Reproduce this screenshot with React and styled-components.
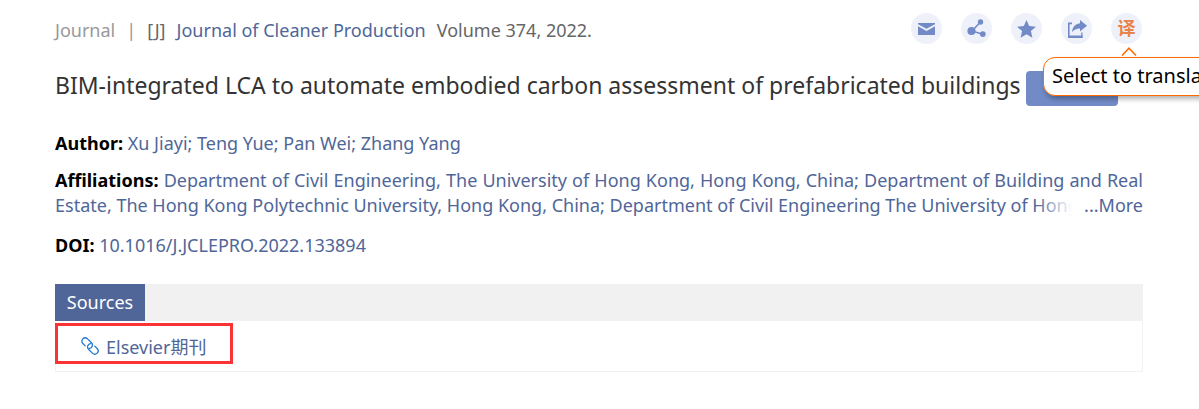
import styled, { createGlobalStyle } from "styled-components";

const color = {
  link: "#506698",
  icon: "#728bc7",
  iconBg: "#eef1f9",
  orange: "#ff6a00",
  red: "#fa3434",
};

const GlobalStyle = createGlobalStyle`
  * {
    box-sizing: border-box;
  }
  body {
    margin: 0;
    background: #fff;
    overflow-x: hidden;
    font-family: "Noto Sans", "Noto Sans CJK SC", sans-serif;
    font-size: 18px;
    line-height: 25px;
    color: #333;
  }
  a {
    color: ${color.link};
    text-decoration: none;
  }
  button {
    border: 0;
    padding: 0;
    font: inherit;
    cursor: pointer;
  }
`;

const Container = styled.main`
  padding: 13px 56px 0 55px;
  overflow: hidden;
`;

const TopBar = styled.header`
  display: flex;
  justify-content: space-between;
  align-items: center;
  height: 34px;
`;

const Source = styled.div`
  display: flex;
  gap: 11px;
  color: #666;
  white-space: nowrap;
`;

const Kind = styled.span`
  color: #999;
`;

const Tools = styled.div`
  display: flex;
  gap: 19px;
  padding: 0 1px 3px 0;
`;

const ToolButton = styled.button`
  position: relative;
  display: flex;
  justify-content: center;
  align-items: center;
  width: 31px;
  height: 31px;
  border-radius: 50%;
  background: ${color.iconBg};
  color: ${(props) => (props.$active ? "#e8834a" : color.icon)};
  font-size: 18px;
  font-weight: ${(props) => (props.$active ? 700 : 400)};
`;

const Caret = styled.svg`
  position: absolute;
  top: 34px;
  left: 10px;
`;

const Tooltip = styled.span`
  position: absolute;
  z-index: 1;
  top: 44px;
  left: -68px;
  width: 240px;
  height: 39px;
  padding: 0 8px;
  border: 1px solid ${color.orange};
  border-radius: 12px;
  background: #fff;
  box-shadow: 2px 3px 5px rgba(0, 0, 0, 0.3);
  color: #000;
  font-size: 20px;
  font-weight: 400;
  line-height: 36px;
  text-align: left;
  white-space: nowrap;
`;

const TitleRow = styled.div`
  display: flex;
  align-items: center;
  gap: 5px;
  margin: 23px 0 25px;
`;

const Title = styled.h1`
  margin: 0;
  font-size: 23px;
  font-weight: 400;
  line-height: 30px;
  padding-bottom: 6px;
  white-space: nowrap;
`;

const ExportButton = styled.button`
  flex: none;
  width: 92px;
  height: 35px;
  border-radius: 4px;
  background: ${color.icon};
`;

const Field = styled.div`
  position: relative;
  max-height: 50px;
  margin-bottom: ${(props) => props.$gap || 12}px;
  overflow: hidden;
  text-align: justify;
`;

const Label = styled.strong`
  color: #000;
  font-weight: 700;
`;

const More = styled.a`
  position: absolute;
  right: 0;
  bottom: 0;
  padding-left: 48px;
  background: linear-gradient(to right, transparent, #fff 36px);
`;

const TabBar = styled.div`
  display: flex;
  margin-top: 26px;
  background: #f1f1f1;
`;

const Tab = styled.button`
  width: 90px;
  height: 37px;
  background: ${color.link};
  color: #fff;
`;

const Panel = styled.div`
  padding: 2px 0 7px;
  border: 1px solid #f1f1f1;
  border-top: 0;
  margin-bottom: 20px;
`;

const SourceLink = styled.a`
  display: flex;
  align-items: center;
  gap: 7px;
  width: 178px;
  height: 41px;
  margin-left: -1px;
  padding: 7px 0 0 23px;
  border: 3px solid ${color.red};

  svg {
    margin-bottom: 3px;
  }
`;

const MailIcon = () => (
  <svg width="17" height="12" viewBox="0 0 17 12" fill="currentColor">
    <path d="M0 0h17v1.2L8.5 5.8 0 1.2zM0 3.2l8.5 4.7L17 3.2V12H0z" />
  </svg>
);

const ShareIcon = () => (
  <svg width="19" height="19" viewBox="0 0 19 19" fill="currentColor">
    <path
      d="M13.5 3 5 12l10 3"
      fill="none"
      stroke="currentColor"
      strokeWidth="1.5"
    />
    <circle cx="13.5" cy="3" r="2.7" />
    <circle cx="4.5" cy="12" r="4.1" />
    <circle cx="15.8" cy="15.1" r="2.9" />
  </svg>
);

const StarIcon = () => (
  <svg width="19" height="18" viewBox="0 0 19 18" fill="currentColor">
    <path d="m9.5 0 2.7 6 6.8.7-5.1 4.4 1.5 6.6-5.9-3.5-5.9 3.5 1.5-6.6L0 6.7 6.8 6z" />
  </svg>
);

const ExportIcon = () => (
  <svg width="20" height="18" viewBox="0 0 20 18" fill="currentColor">
    <path d="M5 2.5v1.7H2.6v11.2H15.5V18H1V2.5z" />
    <path d="M14.2 12.5h1.3V18h-1.3z" />
    <path d="M13 0l7 5.8-7 5.8V8.4C9.7 8.3 7.3 9.5 5 12c.5-4.8 3-8.1 8-8.8z" />
  </svg>
);

const LinkIcon = () => (
  <svg
    width="18"
    height="18"
    viewBox="0 0 18 18"
    fill="none"
    stroke="#1f78d1"
    strokeWidth="1.3"
    strokeLinecap="round"
  >
    <g transform="rotate(45 9 9)">
      <path d="M5.5 12.3H2.2a3.3 3.3 0 0 1 0-6.6h5.6a3.3 3.3 0 0 1 2.5 5.4" />
      <path d="M12.5 5.7h3.3a3.3 3.3 0 0 1 0 6.6h-5.6a3.3 3.3 0 0 1-2.5-5.4" />
    </g>
  </svg>
);

const App = () => (
  <>
    <GlobalStyle />
    <Container>
      <TopBar>
        <Source>
          <Kind>Journal</Kind>
          <Kind>|</Kind>
          <span>[J]</span>
          <a href="#journal">Journal of Cleaner Production</a>
          <span>Volume 374, 2022.</span>
        </Source>
        <Tools>
          <ToolButton aria-label="Email">
            <MailIcon />
          </ToolButton>
          <ToolButton aria-label="Share">
            <ShareIcon />
          </ToolButton>
          <ToolButton aria-label="Favorite">
            <StarIcon />
          </ToolButton>
          <ToolButton aria-label="Export">
            <ExportIcon />
          </ToolButton>
          <ToolButton $active>
            译
            <Caret width="16" height="9" viewBox="0 0 16 9">
              <path
                d="M1 8.5 8 1.2l7 7.3"
                fill="none"
                stroke={color.orange}
                strokeWidth="1.5"
              />
            </Caret>
            <Tooltip role="tooltip">Select to translate</Tooltip>
          </ToolButton>
        </Tools>
      </TopBar>

      <TitleRow>
        <Title>
          BIM-integrated LCA to automate embodied carbon assessment of
          prefabricated buildings
        </Title>
        <ExportButton aria-label="Translate title" />
      </TitleRow>

      <Field>
        <Label>Author:</Label>{" "}
        <a href="#author">Xu Jiayi; Teng Yue; Pan Wei; Zhang Yang</a>
      </Field>
      <Field $gap={15}>
        <Label>Affiliations:</Label>{" "}
        <a href="#affiliations">
          Department of Civil Engineering, The University of Hong Kong, Hong
          Kong, China; Department of Building and Real Estate, The Hong Kong
          Polytechnic University, Hong Kong, China; Department of Civil
          Engineering The University of Hong Kong
        </a>
        <More href="#more">...More</More>
      </Field>
      <Field>
        <Label>DOI:</Label> <a href="#doi">10.1016/J.JCLEPRO.2022.133894</a>
      </Field>

      <TabBar>
        <Tab>Sources</Tab>
      </TabBar>
      <Panel>
        <SourceLink href="#elsevier">
          <LinkIcon />
          Elsevier期刊
        </SourceLink>
      </Panel>
    </Container>
  </>
);

export default App;
